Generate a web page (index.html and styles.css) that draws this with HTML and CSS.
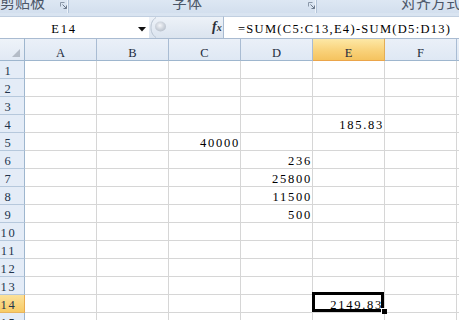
FILE: index.html
```html
<!DOCTYPE html>
<html lang="zh">
<head>
<meta charset="utf-8">
<title>Sheet</title>
<link rel="stylesheet" href="styles.css">
</head>
<body>
<div class="app">
  <div class="ribbon">
    <div class="group g1">
      <span class="glabel">剪贴板</span>
      <span class="launcher"><svg width="8" height="8" viewBox="0 0 8 8"><path d="M0.5 4.5V0.5H4.5" fill="none" stroke="#8a97a8"/><path d="M2.5 2.5L6.5 6.5M3.5 6.5H6.5V3.5" fill="none" stroke="#6d7a8c"/></svg></span>
    </div>
    <div class="group g2">
      <span class="glabel">字体</span>
      <span class="launcher"><svg width="8" height="8" viewBox="0 0 8 8"><path d="M0.5 4.5V0.5H4.5" fill="none" stroke="#8a97a8"/><path d="M2.5 2.5L6.5 6.5M3.5 6.5H6.5V3.5" fill="none" stroke="#6d7a8c"/></svg></span>
    </div>
    <div class="group g3">
      <span class="glabel">对齐方式</span>
    </div>
  </div>

  <div class="fbar">
    <div class="namebox">
      <span class="name">E14</span>
      <span class="dd"><svg width="8" height="5" viewBox="0 0 8 5"><path d="M0 0H8L4 4.5Z" fill="#111"/></svg></span>
    </div>
    <div class="fsep">
      <svg class="knob" width="17" height="21" viewBox="0 0 17 21">
        <defs>
          <radialGradient id="kg" cx="0.45" cy="0.4" r="0.6">
            <stop offset="0" stop-color="#f4f6f9"/>
            <stop offset="0.6" stop-color="#cfd5dd"/>
            <stop offset="1" stop-color="#b9c1cc"/>
          </radialGradient>
        </defs>
        <path d="M6 0.5C2 3 1 7 1 10.5C1 14 2 18 6 20.5" fill="none" stroke="#b8c3d1"/>
        <ellipse cx="10.5" cy="9.5" rx="5.5" ry="5" fill="url(#kg)"/>
      </svg>
      <span class="fx">f<span class="fxx">x</span></span>
    </div>
    <div class="formula">=SUM(C5:C13,E4)-SUM(D5:D13)</div>
  </div>

  <div class="sheet">
    <div class="corner"><svg width="8" height="8" viewBox="0 0 8 8"><path d="M8 0V8H0Z" fill="#b4bcc7"/></svg></div>
    <div class="ch">A</div><div class="ch">B</div><div class="ch">C</div><div class="ch">D</div><div class="ch hl">E</div><div class="ch">F</div><div class="ch">G</div>

    <div class="rh">1</div><div class="c"></div><div class="c"></div><div class="c"></div><div class="c"></div><div class="c"></div><div class="c"></div><div class="c"></div>
    <div class="rh">2</div><div class="c"></div><div class="c"></div><div class="c"></div><div class="c"></div><div class="c"></div><div class="c"></div><div class="c"></div>
    <div class="rh">3</div><div class="c"></div><div class="c"></div><div class="c"></div><div class="c"></div><div class="c"></div><div class="c"></div><div class="c"></div>
    <div class="rh">4</div><div class="c"></div><div class="c"></div><div class="c"></div><div class="c"></div><div class="c">185.83</div><div class="c"></div><div class="c"></div>
    <div class="rh">5</div><div class="c"></div><div class="c"></div><div class="c">40000</div><div class="c"></div><div class="c"></div><div class="c"></div><div class="c"></div>
    <div class="rh">6</div><div class="c"></div><div class="c"></div><div class="c"></div><div class="c">236</div><div class="c"></div><div class="c"></div><div class="c"></div>
    <div class="rh">7</div><div class="c"></div><div class="c"></div><div class="c"></div><div class="c">25800</div><div class="c"></div><div class="c"></div><div class="c"></div>
    <div class="rh">8</div><div class="c"></div><div class="c"></div><div class="c"></div><div class="c">11500</div><div class="c"></div><div class="c"></div><div class="c"></div>
    <div class="rh">9</div><div class="c"></div><div class="c"></div><div class="c"></div><div class="c">500</div><div class="c"></div><div class="c"></div><div class="c"></div>
    <div class="rh">10</div><div class="c"></div><div class="c"></div><div class="c"></div><div class="c"></div><div class="c"></div><div class="c"></div><div class="c"></div>
    <div class="rh">11</div><div class="c"></div><div class="c"></div><div class="c"></div><div class="c"></div><div class="c"></div><div class="c"></div><div class="c"></div>
    <div class="rh">12</div><div class="c"></div><div class="c"></div><div class="c"></div><div class="c"></div><div class="c"></div><div class="c"></div><div class="c"></div>
    <div class="rh">13</div><div class="c"></div><div class="c"></div><div class="c"></div><div class="c"></div><div class="c"></div><div class="c"></div><div class="c"></div>
    <div class="rh hl">14</div><div class="c"></div><div class="c"></div><div class="c"></div><div class="c"></div><div class="c sel">2149.83<span class="selbox"></span><span class="handle"></span></div><div class="c"></div><div class="c"></div>
    <div class="rh">15</div><div class="c"></div><div class="c"></div><div class="c"></div><div class="c"></div><div class="c"></div><div class="c"></div><div class="c"></div>
  </div>
</div>
</body>
</html>
```

FILE: styles.css
```css
html, body {
  margin: 0;
  padding: 0;
  background: #ffffff;
}

.app {
  width: 459px;
  height: 320px;
  overflow: hidden;
  font-family: "Liberation Serif", "Noto Sans CJK SC", serif;
  font-size: 12.5px;
  letter-spacing: 1.75px;
  color: #000;
}

/* ---------- ribbon strip ---------- */
.ribbon {
  display: flex;
  height: 13px;
  overflow: hidden;
  background: linear-gradient(#dde7f3, #d3dfee);
  letter-spacing: 0;
}

.group {
  display: flex;
  align-items: flex-start;
  box-sizing: border-box;
  border-right: 1px solid #b3c4d9;
  box-shadow: inset -1px 0 0 #eef3f9;
}

.glabel {
  font-family: "Noto Sans CJK SC", sans-serif;
  font-size: 15px;
  line-height: 4px;
  color: #4b5668;
  white-space: nowrap;
}

.launcher {
  display: flex;
  margin-top: 2px;
}

.g1 {
  width: 73px;
}
.g1 .glabel {
  width: 45px;
}
.g1 .launcher {
  margin-left: 15px;
}

.g2 {
  width: 254px;
}
.g2 .glabel {
  width: 236px;
  text-align: center;
}
.g2 .launcher {
  margin-left: 3px;
}

.g3 {
  flex: 1;
  border-right: none;
  box-shadow: none;
  padding-left: 84px;
}

/* ---------- formula bar ---------- */
.fbar {
  display: flex;
  height: 25px;
  box-sizing: border-box;
  padding-top: 3px;
  background: #d9e4f1;
}

.namebox {
  display: flex;
  width: 149px;
  box-sizing: border-box;
  background: #fff;
  border-top: 1px solid #c1cfe0;
}

.name {
  width: 124px;
  text-align: center;
  padding-top: 3px;
  padding-left: 2px;
  line-height: 18px;
}

.dd {
  display: flex;
  align-items: center;
  padding-top: 3px;
  margin-left: 12px;
}

.fsep {
  display: flex;
  align-items: center;
  width: 75px;
  box-sizing: border-box;
  background: linear-gradient(#edf2f8, #dbe4ef);
  border-top: 1px solid #c1cfe0;
  border-right: 1px solid #a9bbd1;
}

.knob {
  margin-left: 1px;
}

.fx {
  margin-left: 45px;
  font-family: "Liberation Serif", serif;
  font-style: italic;
  font-weight: bold;
  font-size: 14px;
  letter-spacing: 0;
  color: #2a2f38;
  line-height: 14px;
}

.fxx {
  font-size: 10px;
}

.formula {
  flex: 1;
  background: #fff;
  border-top: 1px solid #c1cfe0;
  padding-left: 14px;
  padding-top: 3px;
  line-height: 18px;
  letter-spacing: 1.3px;
  white-space: nowrap;
}

/* ---------- sheet grid ---------- */
.sheet {
  display: grid;
  grid-template-columns: 25px repeat(7, 72px);
  grid-template-rows: 23px;
  grid-auto-rows: 18px;
}

.corner,
.ch,
.rh,
.c {
  box-sizing: border-box;
}

.corner {
  display: flex;
  justify-content: flex-end;
  align-items: flex-end;
  padding: 0 4px 3px 0;
  background: linear-gradient(#eef3f9, #e1e9f4);
  border-top: 1px solid #a9bbd1;
  border-right: 1px solid #9eb6ce;
  border-bottom: 1px solid #9eb6ce;
}

.ch {
  display: flex;
  justify-content: center;
  align-items: flex-end;
  line-height: 14px;
  letter-spacing: 0;
  color: #1d2a3c;
  background: linear-gradient(#eaf0f8, #dfe8f4);
  border-top: 1px solid #a9bbd1;
  border-right: 1px solid #a9bcd3;
  border-bottom: 1px solid #9eb6ce;
}

.ch.hl {
  background: linear-gradient(#fde8a6, #f9d27a 55%, #f5c35f);
  border-right-color: #e3ad56;
  border-bottom-color: #eba54a;
}

.rh {
  display: flex;
  align-items: flex-end;
  justify-content: center;
  padding-right: 7px;
  line-height: 14px;
  color: #22344d;
  background: #e4ecf7;
  border-right: 1px solid #9eb6ce;
  border-bottom: 1px solid #b6c8dc;
}

.rh.hl {
  background: linear-gradient(#fbe19a, #f7cb66);
  border-right-color: #e8ab4f;
  border-bottom-color: #e8b45d;
}

.c {
  display: flex;
  justify-content: flex-end;
  align-items: flex-end;
  padding-right: 0;
  line-height: 14px;
  white-space: nowrap;
  border-right: 1px solid #d6d6d6;
  border-bottom: 1px solid #d6d6d6;
}

.sel {
  position: relative;
  padding-right: 1px;
}

.selbox {
  position: absolute;
  left: -1px;
  top: -3px;
  right: 0;
  bottom: 0;
  border: 3px solid #000;
}

.handle {
  position: absolute;
  right: -3px;
  bottom: -2px;
  width: 5px;
  height: 5px;
  background: #000;
  border-left: 1px solid #fff;
  border-top: 1px solid #fff;
}
```
